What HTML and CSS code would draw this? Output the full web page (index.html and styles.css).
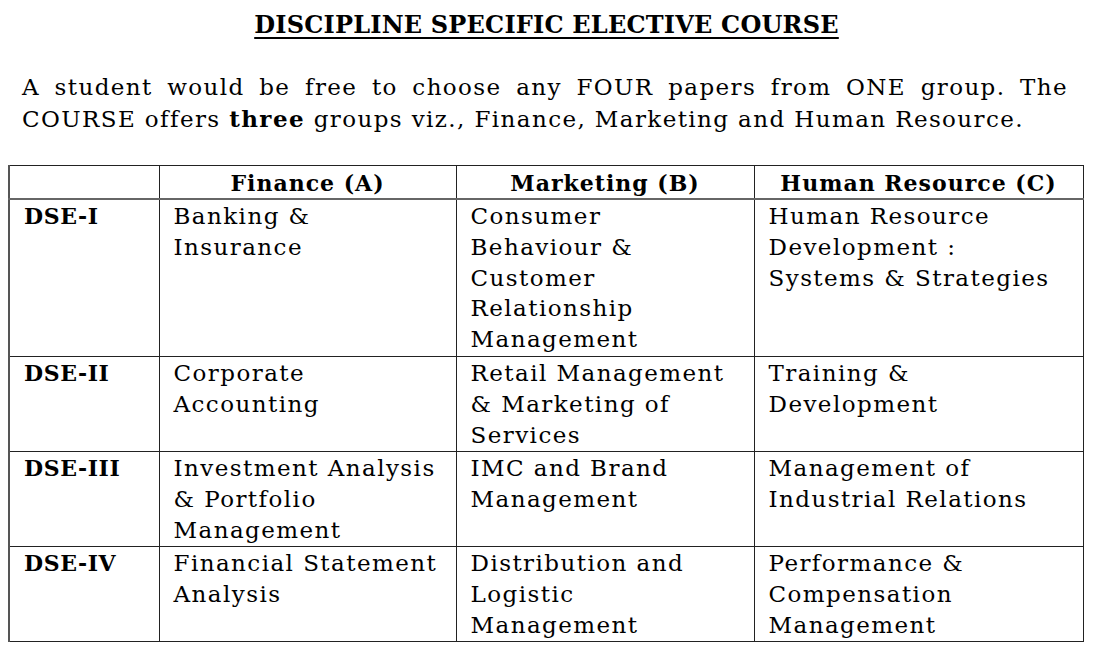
FILE: index.html
```html
<!DOCTYPE html>
<html>
<head>
<meta charset="utf-8">
<link rel="stylesheet" href="styles.css">
</head>
<body>
<div class="page">
  <h1 class="title">DISCIPLINE SPECIFIC ELECTIVE COURSE</h1>
  <p class="intro"><span class="line1">A student would be free to choose any FOUR papers from ONE group. The</span> COURSE offers <b>three</b> groups viz., Finance, Marketing and Human Resource.</p>
  <table class="dse">
    <colgroup>
      <col class="c0"><col class="c1"><col class="c2"><col class="c3">
    </colgroup>
    <thead>
      <tr class="head">
        <th></th>
        <th>Finance (A)</th>
        <th>Marketing (B)</th>
        <th>Human Resource (C)</th>
      </tr>
    </thead>
    <tbody>
      <tr class="r1">
        <td class="lab">DSE-I</td>
        <td>Banking &amp;<br>Insurance</td>
        <td>Consumer<br>Behaviour &amp;<br>Customer<br>Relationship<br>Management</td>
        <td>Human Resource<br>Development :<br>Systems &amp; Strategies</td>
      </tr>
      <tr class="r2">
        <td class="lab">DSE-II</td>
        <td>Corporate<br>Accounting</td>
        <td>Retail Management<br>&amp; Marketing of<br>Services</td>
        <td>Training &amp;<br>Development</td>
      </tr>
      <tr class="r3">
        <td class="lab">DSE-III</td>
        <td>Investment Analysis<br>&amp; Portfolio<br>Management</td>
        <td>IMC and Brand<br>Management</td>
        <td>Management of<br>Industrial Relations</td>
      </tr>
      <tr class="r4">
        <td class="lab">DSE-IV</td>
        <td>Financial Statement<br>Analysis</td>
        <td>Distribution and<br>Logistic<br>Management</td>
        <td>Performance &amp;<br>Compensation<br>Management</td>
      </tr>
    </tbody>
  </table>
</div>
</body>
</html>
```

FILE: styles.css
```css
html, body {
  margin: 0;
  padding: 0;
  background: #fff;
}
.page {
  width: 1096px;
  height: 656px;
  overflow: hidden;
  font-family: "DejaVu Serif", "Liberation Serif", serif;
  color: #000;
  padding-top: 8px;
  box-sizing: border-box;
}
.title {
  margin: 0;
  text-align: center;
  font-size: 24px;
  font-weight: bold;
  line-height: 34px;
  letter-spacing: 0.2px;
  text-decoration: underline;
  text-decoration-thickness: 2px;
  text-underline-offset: 4px;
  padding-right: 3px;
}
.intro {
  margin: 30px 28px 0 22px;
  font-size: 23px;
  line-height: 31px;
  letter-spacing: 1.4px;
  text-align: justify;
}
.line1 {
  display: block;
  text-align: justify;
  text-align-last: justify;
}
.dse {
  margin: 30px 0 0 8px;
  width: 1074px;
  border-collapse: collapse;
  table-layout: fixed;
  font-size: 23px;
  line-height: 30.8px;
  letter-spacing: 1.44px;
}
.c0 { width: 150px; }
.c1 { width: 297px; }
.c2 { width: 298px; }
.c3 { width: 329px; }
.dse th, .dse td {
  border: 1px solid #222;
  vertical-align: top;
  text-align: left;
  padding: 1px 4px 0 14px;
  font-weight: normal;
  white-space: nowrap;
}
.dse th {
  text-align: center;
  font-weight: bold;
  font-size: 22px;
  line-height: 28px;
  letter-spacing: 1px;
  height: 30px;
  padding: 2px 0 0;
  border-bottom: 2px solid #666;
  vertical-align: middle;
}
.dse td.lab {
  font-weight: bold;
  font-size: 22px;
  letter-spacing: 0.6px;
}
.r1 td { height: 155px; }
.r2 td, .r3 td, .r4 td { height: 93px; }
.dse tr > :first-child { border-left: 2px solid #555; }
```
